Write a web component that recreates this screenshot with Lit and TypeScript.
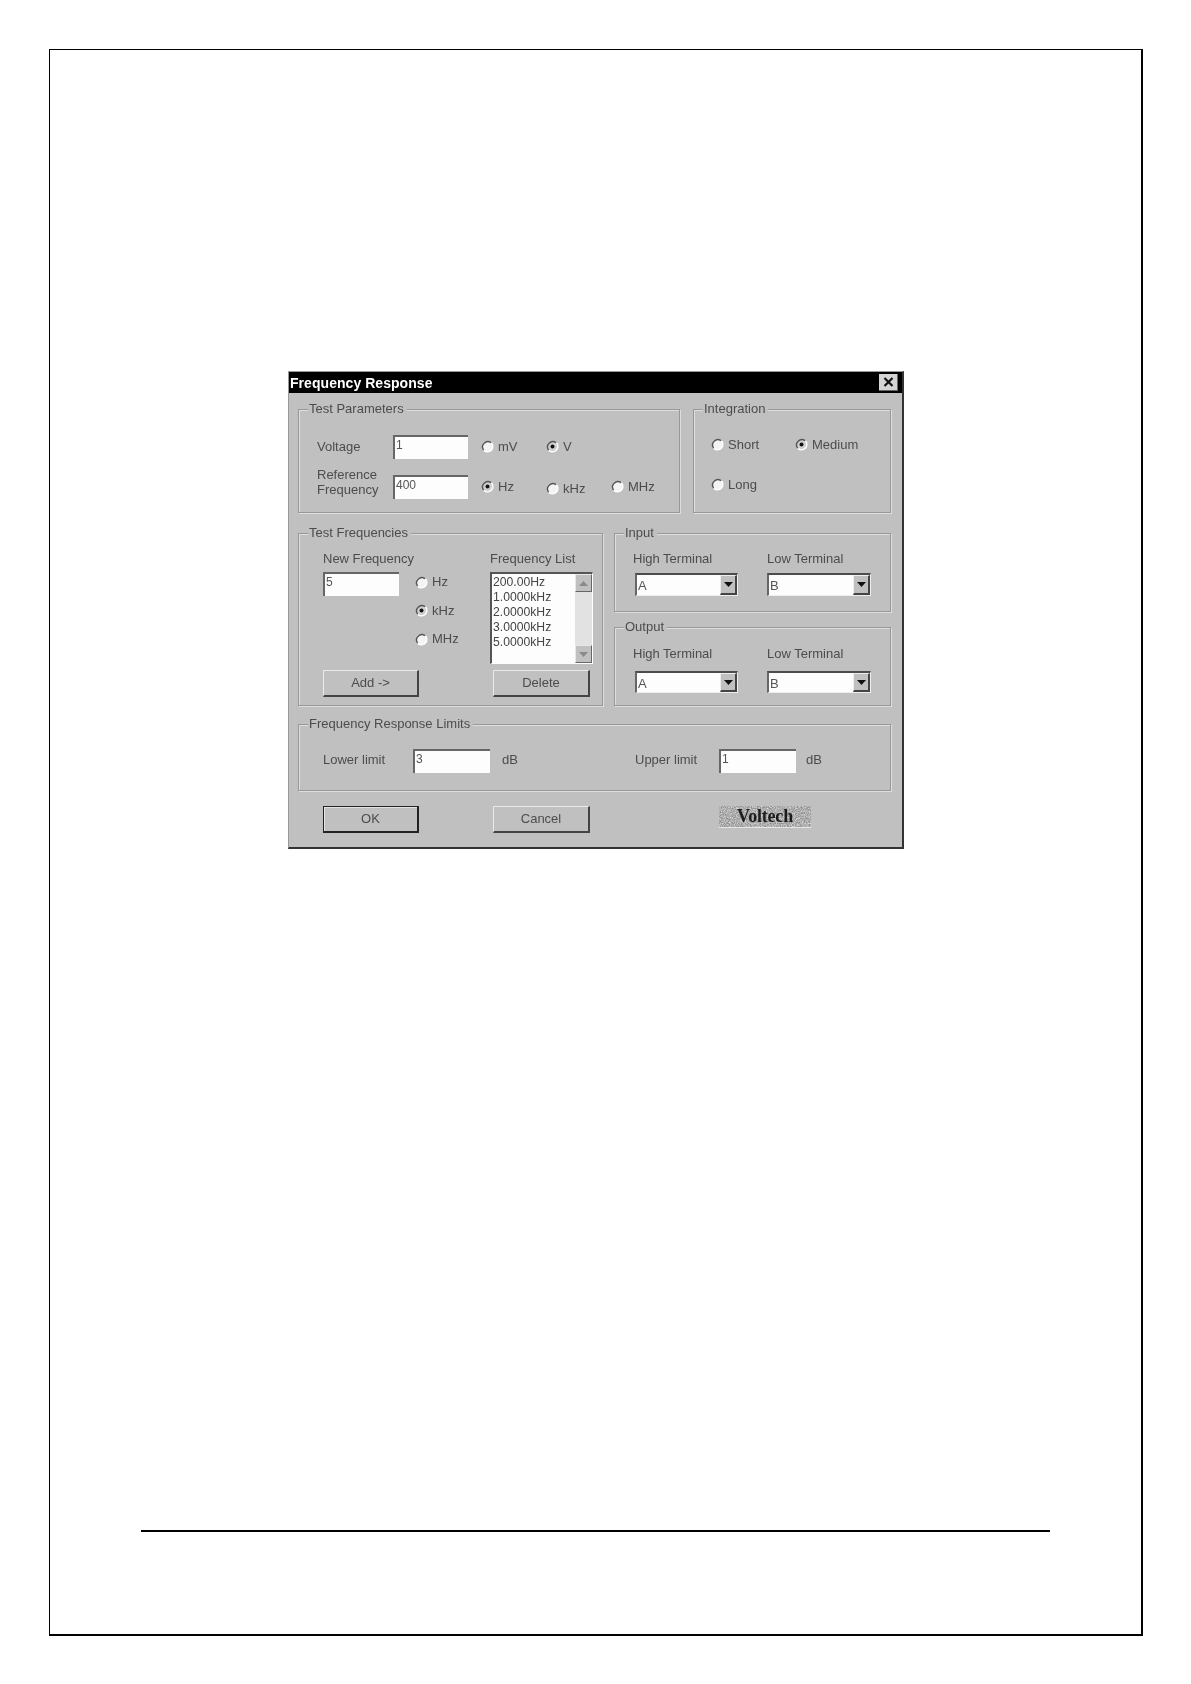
import { LitElement, html, css, svg } from "lit";
import { customElement } from "lit/decorators.js";

const radio = (label: string, checked = false, cls = "") => html`<span class="radio ${cls}">
  <svg width="13" height="13" viewBox="0 0 13 13" aria-hidden="true">
    <circle cx="6.5" cy="6.5" r="5.5" fill="${checked ? "#d0d0d0" : "#f4f4f4"}"/>
    <path d="M10 2.6A5.3 5.3 0 0 0 2.6 10" fill="none" stroke="#555" stroke-width="1.4"/>
    <path d="M10.6 3A5.4 5.4 0 0 1 3 10.6" fill="none" stroke="#fff" stroke-width="1.5"/>
    ${checked ? svg`<circle cx="6.5" cy="6.5" r="2" fill="#111"/>` : ""}
  </svg>
  <span>${label}</span>
</span>`;

const field = (v: string) => html`<div class="field">${v}</div>`;

const select = (v: string) => html`<div class="select">
  <span>${v}</span>
  <span class="drop"><svg width="9" height="5" viewBox="0 0 9 5"><path d="M0 0H9L4.5 5Z" fill="#111"/></svg></span>
</div>`;

const group = (legend: string, cls: string, body: unknown) => html`<section class="group ${cls}">
  <span class="legend">${legend}</span>
  ${body}
</section>`;

const terminals = (cls: string) => html`<div class="terminals ${cls}">
  <div class="tlabel">High Terminal</div>
  <div class="tlabel">Low Terminal</div>
  <div class="first">${select("A")}</div>
  <div>${select("B")}</div>
</div>`;

@customElement("app-root")
export class AppRoot extends LitElement {
  static styles = css`
    :host { display: block; width: 1191px; height: 1684px; background: #fff; overflow: hidden; }
    .page {
      box-sizing: border-box; width: 1094px; height: 1587px; margin: 49px 0 0 49px;
      border-style: solid; border-color: #000; border-width: 1px 2px 2px 1px; padding-top: 321px;
    }
    .dialog {
      box-sizing: border-box; width: 616px; height: 478px; margin-left: 238px;
      background: #c0c0c0; border-top: 1px solid #999; border-left: 1px solid #999;
      border-right: 2px solid #333; border-bottom: 2px solid #333;
      font: 13px "Liberation Sans", Arial, sans-serif; color: #4c4c4c; filter: blur(0.6px);
    }
    .title {
      box-sizing: border-box; height: 21px; margin-bottom: 1px; background: #000; color: #fff; display: flex; align-items: center;
      justify-content: space-between; padding: 0 4px 0 1px; font-weight: bold; font-size: 14px; letter-spacing: 0.05px;
    }
    .close {
      width: 18px; height: 16px; background: #d4d4d4; display: flex; align-items: center; justify-content: center;
      border-right: 1px solid #666; border-bottom: 1px solid #666;
    }
    .body { padding: 15px 0 0 9px; }
    .row { display: flex; }
    .group {
      box-sizing: border-box; position: relative; border: 1px solid #989898;
      box-shadow: 1px 1px 0 #dedede, inset 1px 1px 0 #dedede;
    }
    .legend {
      position: absolute; top: -9px; left: 9px; padding: 0 3px 0 1px; background: #c0c0c0; line-height: 16px; white-space: nowrap;
    }
    .row1 { gap: 13px; margin-bottom: 20px; }
    .params { width: 382px; height: 104px; }
    .integ { width: 198px; height: 104px; }
    .params .grid {
      display: grid; grid-template-columns: 76px 75px 78px 65px 65px; grid-auto-rows: 24px; row-gap: 16px;
      padding: 25px 0 0 18px; align-items: center;
    }
    .params .volt { padding-bottom: 2px; }
    .params .ref { line-height: 15px; margin-top: -11px; }
    .params .radio-first { padding-left: 13px; }
    .integ .grid {
      display: grid; grid-template-columns: 84px 90px; grid-auto-rows: 24px; row-gap: 16px;
      padding: 23px 0 0 17px; align-items: center;
    }
    .radio { display: inline-flex; align-items: center; gap: 4px; white-space: nowrap; }
    .radio svg { flex: none; }
    .low { position: relative; top: 2px; }
    .field {
      box-sizing: border-box; background: #fdfdfd; height: 24px; padding: 0 0 0 1px; font-size: 12px; line-height: 16px; color: #555;
      border-top: 2px solid #666; border-left: 2px solid #666;
    }
    .row2 { gap: 11px; margin-bottom: 18px; }
    .freqs { width: 305px; height: 173px; }
    .freqs .grid {
      display: grid; grid-template-columns: 167px 103px; grid-template-rows: 16px 92px 26px; row-gap: 5px;
      padding: 17px 0 0 24px; line-height: 16px;
    }
    .freqs .grid > .btn { margin-top: 1px; }
    .newf { display: flex; align-items: flex-start; gap: 16px; }
    .newf .field { width: 76px; }
    .stack { display: flex; flex-direction: column; gap: 12.5px; padding-top: 2px; }
    .list {
      box-sizing: border-box; display: flex; background: #fdfdfd; height: 92px; font-size: 12.2px; line-height: 15px; color: #444;
      border-top: 2px solid #555; border-left: 2px solid #555; border-right: 1px solid #fff; border-bottom: 1px solid #fff;
    }
    .items { flex: 1; padding: 1px 0 0 1px; }
    .scroll { width: 17px; display: flex; flex-direction: column; justify-content: space-between; background: #e2e2e2; }
    .sbtn {
      box-sizing: border-box; height: 18px; background: #c0c0c0; display: flex; align-items: center; justify-content: center;
      border-right: 1px solid #666; border-bottom: 1px solid #666; border-top: 1px solid #e8e8e8; border-left: 1px solid #e8e8e8;
    }
    .btn {
      box-sizing: border-box; height: 27px; width: 96px; background: #c0c0c0; display: flex; align-items: center; justify-content: center;
      border-top: 1px solid #eaeaea; border-left: 1px solid #eaeaea; border-right: 2px solid #444; border-bottom: 2px solid #444;
      color: #4c4c4c;
    }
    .btn.wide { width: 97px; }
    .btn.del { margin-left: 3px; }
    .btn.def { border: 1px solid #222; border-right-width: 2px; border-bottom-width: 2px; box-shadow: inset 1px 1px 0 #e4e4e4; }
    .io { display: flex; flex-direction: column; gap: 15px; width: 277px; }
    .terminal { width: 277px; height: 79px; }
    .terminals {
      display: grid; grid-template-columns: 134px 104px; grid-template-rows: 16px 23px; padding: 17px 0 0 18px; row-gap: 6px; line-height: 16px;
    }
    .terminals.out { padding-top: 18px; row-gap: 9px; grid-template-rows: 16px 22px; }
    .terminals .first { margin-left: 2px; width: 103px; }
    .select {
      box-sizing: border-box; height: 100%; display: flex; justify-content: space-between; background: #fdfdfd; color: #555; font-size: 13px;
      border-top: 2px solid #4c4c4c; border-left: 2px solid #666; border-right: 1px solid #eee; border-bottom: 1px solid #eee;
    }
    .select > span:first-child { padding: 3px 0 0 1px; line-height: 15px; }
    .drop {
      width: 17px; background: #c0c0c0; display: flex; align-items: center; justify-content: center;
      border-right: 2px solid #444; border-bottom: 2px solid #444; border-top: 1px solid #eee; border-left: 1px solid #eee; box-sizing: border-box;
    }
    .limits { width: 593px; height: 67px; margin-bottom: 15px; }
    .limits .grid {
      display: grid; grid-template-columns: 90px 77px 145px 84px 77px auto; grid-auto-rows: 24px; align-items: center; padding: 24px 0 0 24px;
    }
    .limits .txt { padding-bottom: 3px; }
    .db { padding-left: 12px; }
    .db.up { padding-left: 10px; }
    .foot { display: flex; padding-left: 25px; }
    .foot .btn { padding-bottom: 2px; }
    .foot .btn:nth-child(2) { margin-left: 74px; }
    .logo {
      position: relative; box-sizing: border-box; margin-left: 129px; width: 92px; height: 22px; display: flex; align-items: center; justify-content: center;
      font: bold 18px "Liberation Serif", "Times New Roman", serif; color: #1c1c1c;
      background: #8f8f8f; border-bottom: 1px solid #e6e6e6; overflow: hidden; letter-spacing: -0.2px;
    }
    .logo svg { position: absolute; inset: 0; }
    .logo span { position: relative; }
    .rule { width: 909px; height: 2px; background: #000; margin: 681px 0 0 91px; }
  `;

  render() {
    const chev = (up: boolean) => html`<svg width="9" height="5" viewBox="0 0 9 5"><path d="${up ? "M0 5H9L4.5 0Z" : "M0 0H9L4.5 5Z"}" fill="#8a8a8a"/></svg>`;
    return html`<div class="page">
      <div class="dialog">
        <div class="title">
          <span>Frequency Response</span>
          <span class="close"><svg width="11" height="10" viewBox="0 0 11 10"><path d="M1.5 1L9.5 9M9.5 1L1.5 9" stroke="#111" stroke-width="2.2" fill="none"/></svg></span>
        </div>
        <div class="body">
          <div class="row row1">
            ${group("Test Parameters", "params", html`<div class="grid">
              <div class="volt">Voltage</div>${field("1")}
              <div class="radio-first">${radio("mV")}</div><div>${radio("V", true)}</div><div></div>
              <div class="ref">Reference<br />Frequency</div>${field("400")}
              <div class="radio-first">${radio("Hz", true)}</div><div>${radio("kHz", false, "low")}</div><div>${radio("MHz")}</div>
            </div>`)}
            ${group("Integration", "integ", html`<div class="grid">
              <div>${radio("Short")}</div><div>${radio("Medium", true)}</div>
              <div>${radio("Long")}</div>
            </div>`)}
          </div>
          <div class="row row2">
            ${group("Test Frequencies", "freqs", html`<div class="grid">
              <div>New Frequency</div>
              <div>Frequency List</div>
              <div class="newf">
                ${field("5")}
                <div class="stack">${radio("Hz")}${radio("kHz", true)}${radio("MHz")}</div>
              </div>
              <div class="list">
                <div class="items">
                  <div>200.00Hz</div><div>1.0000kHz</div><div>2.0000kHz</div><div>3.0000kHz</div><div>5.0000kHz</div>
                </div>
                <div class="scroll"><span class="sbtn">${chev(true)}</span><span class="sbtn">${chev(false)}</span></div>
              </div>
              <div class="btn">Add -&gt;</div>
              <div class="btn wide del">Delete</div>
            </div>`)}
            <div class="io">
              ${group("Input", "terminal", terminals(""))}
              ${group("Output", "terminal", terminals("out"))}
            </div>
          </div>
          ${group("Frequency Response Limits", "limits", html`<div class="grid">
            <div class="txt">Lower limit</div>${field("3")}<div class="db txt">dB</div>
            <div class="txt">Upper limit</div>${field("1")}<div class="db up txt">dB</div>
          </div>`)}
          <div class="foot">
            <div class="btn def">OK</div>
            <div class="btn wide">Cancel</div>
            <div class="logo">
              <svg width="92" height="22"><filter id="n"><feTurbulence type="fractalNoise" baseFrequency="0.8" numOctaves="2"/><feColorMatrix type="matrix" values="0 0 0 0 0.8  0 0 0 0 0.8  0 0 0 0 0.8  1.8 0 0 0 -0.55"/></filter><rect width="92" height="22" filter="url(#n)"/></svg>
              <span>Voltech</span>
            </div>
          </div>
        </div>
      </div>
      <div class="rule"></div>
    </div>`;
  }
}
